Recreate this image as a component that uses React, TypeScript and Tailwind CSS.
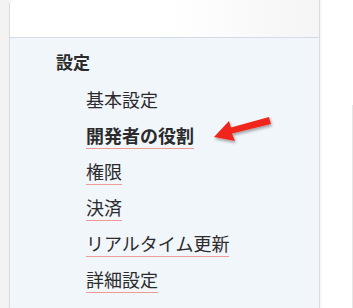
import React from "react";

const items = [
  { label: "基本設定", active: false, underline: false },
  { label: "開発者の役割", active: true, underline: true },
  { label: "権限", active: false, underline: true },
  { label: "決済", active: false, underline: true },
  { label: "リアルタイム更新", active: false, underline: true },
  { label: "詳細設定", active: false, underline: true },
];

export default function App() {
  return (
    <div
      className="relative flex h-[308px] w-[353px] overflow-hidden bg-white text-[#2b2b2b]"
      style={{ fontFamily: '"Noto Sans CJK JP", "Noto Sans", sans-serif' }}
    >
      <div className="w-[9px] shrink-0 bg-[#f3f3f3]" />
      <div className="flex w-[311px] shrink-0 flex-col rounded-tl-[5px] border-l border-r border-[#dcdcdc] shadow-[1px_0_3px_rgba(0,0,0,0.06)]">
        <div className="h-[38px] shrink-0 rounded-tl-[5px] border-b border-[#d3dce6] bg-gradient-to-r from-white via-white to-[#f5f5f5]" />
        <div className="flex-1 bg-[#f1f6fb] pl-[46px] pt-[11px]">
          <div className="text-[17px] font-bold leading-[26px]">設定</div>
          <ul className="mt-[12px] flex flex-col gap-[10px] pl-[30px]">
            {items.map((it) => (
              <li key={it.label} className="h-[26px]">
                <span
                  className={
                    "inline-block text-[18px] leading-[25px] " +
                    (it.active ? "font-bold " : "font-normal ") +
                    (it.underline ? "border-b border-[#ef9a96]" : "border-b border-transparent")
                  }
                >
                  {it.label}
                </span>
              </li>
            ))}
          </ul>
        </div>
      </div>
      <div className="relative flex-1">
        <div className="absolute right-0 top-[105px] h-[203px] w-px bg-[#e6e6e6]" />
      </div>
      <svg
        className="absolute left-[205px] top-[112px]"
        width="75"
        height="40"
        viewBox="0 0 75 40"
      >
        <defs>
          <filter id="sh" x="-20%" y="-40%" width="150%" height="200%">
            <feDropShadow dx="1" dy="2" stdDeviation="1.5" floodColor="#000" floodOpacity="0.35" />
          </filter>
        </defs>
        <g filter="url(#sh)">
          <path d="M64 5 L66 12 L27 21.5 L30 29 L9 25 L24 9 L26 15.5 Z" fill="#f0281a" />
        </g>
      </svg>
    </div>
  );
}
